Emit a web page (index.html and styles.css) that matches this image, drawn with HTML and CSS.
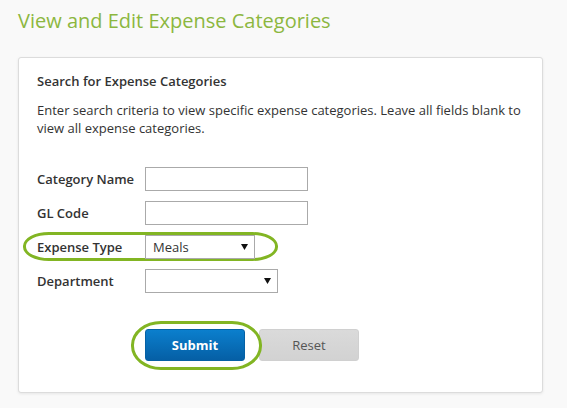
FILE: index.html
```html
<!DOCTYPE html>
<html lang="en">
<head>
<meta charset="utf-8">
<title>View and Edit Expense Categories</title>
<link rel="stylesheet" href="styles.css">
</head>
<body>
<h1 class="page-title">View and Edit Expense Categories</h1>
<section class="card">
  <h2 class="card-heading">Search for Expense Categories</h2>
  <p class="card-intro">Enter search criteria to view specific expense categories. Leave all fields blank to view all expense categories.</p>
  <form class="search-form">
    <div class="form-row">
      <label class="form-label" for="cat">Category Name</label>
      <input class="text-input" id="cat" type="text">
    </div>
    <div class="form-row">
      <label class="form-label" for="gl">GL Code</label>
      <input class="text-input" id="gl" type="text">
    </div>
    <div class="form-row">
      <span class="highlight highlight-row"></span>
      <label class="form-label" for="etype">Expense Type</label>
      <span class="select-wrap select-short">
        <select class="select-input" id="etype"><option>Meals</option></select>
        <svg class="select-arrow" width="7" height="6" viewBox="0 0 7 6"><path d="M0 0H7L3.5 6Z" fill="#111"/></svg>
      </span>
    </div>
    <div class="form-row">
      <label class="form-label" for="dept">Department</label>
      <span class="select-wrap select-long">
        <select class="select-input" id="dept"><option></option></select>
        <svg class="select-arrow" width="7" height="6" viewBox="0 0 7 6"><path d="M0 0H7L3.5 6Z" fill="#111"/></svg>
      </span>
    </div>
    <div class="button-row">
      <span class="btn-wrap">
        <span class="highlight highlight-btn"></span>
        <button class="btn btn-primary" type="button">Submit</button>
      </span>
      <button class="btn btn-secondary" type="button">Reset</button>
    </div>
  </form>
</section>
</body>
</html>
```
FILE: styles.css
```css
* { box-sizing: border-box; }
html, body { margin: 0; padding: 0; }
body {
  background: #f9f9f9;
  font-family: "Open Sans", "Liberation Sans", sans-serif;
  color: #333;
  width: 567px;
  height: 408px;
  overflow: hidden;
}
.page-title {
  margin: 7px 0 0 18px;
  font-size: 20px;
  font-weight: 400;
  line-height: 28px;
  color: #8cb73f;
}
.card {
  margin: 22px 0 0 18px;
  width: 525px;
  height: 336px;
  background: #fff;
  border: 1px solid #dcdcdc;
  border-radius: 3px;
  box-shadow: 0 1px 3px rgba(0,0,0,0.08);
  padding: 14px 18px 0 18px;
}
.card-heading {
  margin: 0;
  font-size: 13px;
  font-weight: 600;
  line-height: 18px;
  color: #333;
}
.card-intro {
  margin: 11px 0 0 0;
  font-size: 13px;
  line-height: 18px;
  color: #333;
}
.search-form {
  margin-top: 30px;
  display: flex;
  flex-direction: column;
  gap: 10px;
}
.form-row {
  position: relative;
  display: flex;
  align-items: center;
  height: 24px;
}
.form-label {
  width: 108px;
  font-size: 13px;
  font-weight: 600;
  line-height: 24px;
  color: #333;
}
.text-input {
  width: 163px;
  height: 24px;
  border: 1px solid #aaa;
  border-radius: 0;
  background: #fff;
  padding: 0 6px;
  font: inherit;
  font-size: 13px;
  margin: 0;
}
.select-wrap {
  position: relative;
  display: inline-block;
  height: 24px;
}
.select-short { width: 110px; }
.select-long { width: 133px; }
.select-input {
  -webkit-appearance: none;
  appearance: none;
  width: 100%;
  height: 24px;
  margin: 0;
  border: 1px solid #aaa;
  border-radius: 0;
  background: #fff;
  padding: 0 0 0 7px;
  font-family: "Open Sans", "Liberation Sans", sans-serif;
  font-size: 13px;
  color: #333;
  outline: none;
}
.select-arrow {
  position: absolute;
  top: 9px;
  right: 7px;
  pointer-events: none;
}
.button-row {
  margin-top: 26px;
  margin-left: 108px;
  display: flex;
  gap: 14px;
}
.btn-wrap {
  position: relative;
  display: inline-block;
}
.btn {
  width: 100px;
  height: 32px;
  border-radius: 3px;
  font-family: "Open Sans", "Liberation Sans", sans-serif;
  font-size: 13px;
  cursor: pointer;
  margin: 0;
  display: block;
}
.btn-primary {
  border: 1px solid #0561a5;
  background: linear-gradient(#0b7fcd, #055fa5);
  color: #fff;
  font-weight: 700;
}
.btn-secondary {
  border: 1px solid #d0d0d0;
  background: linear-gradient(#dadada, #d2d2d2);
  color: #555;
  font-weight: 400;
}
.highlight {
  position: absolute;
  border: 3px solid #82b523;
  pointer-events: none;
}
.highlight-row {
  left: -14px;
  top: -3px;
  width: 255px;
  height: 29px;
  border-radius: 26px / 14px;
}
.highlight-btn {
  left: -14px;
  top: -8px;
  width: 131px;
  height: 49px;
  border-radius: 30px / 24px;
}
```
